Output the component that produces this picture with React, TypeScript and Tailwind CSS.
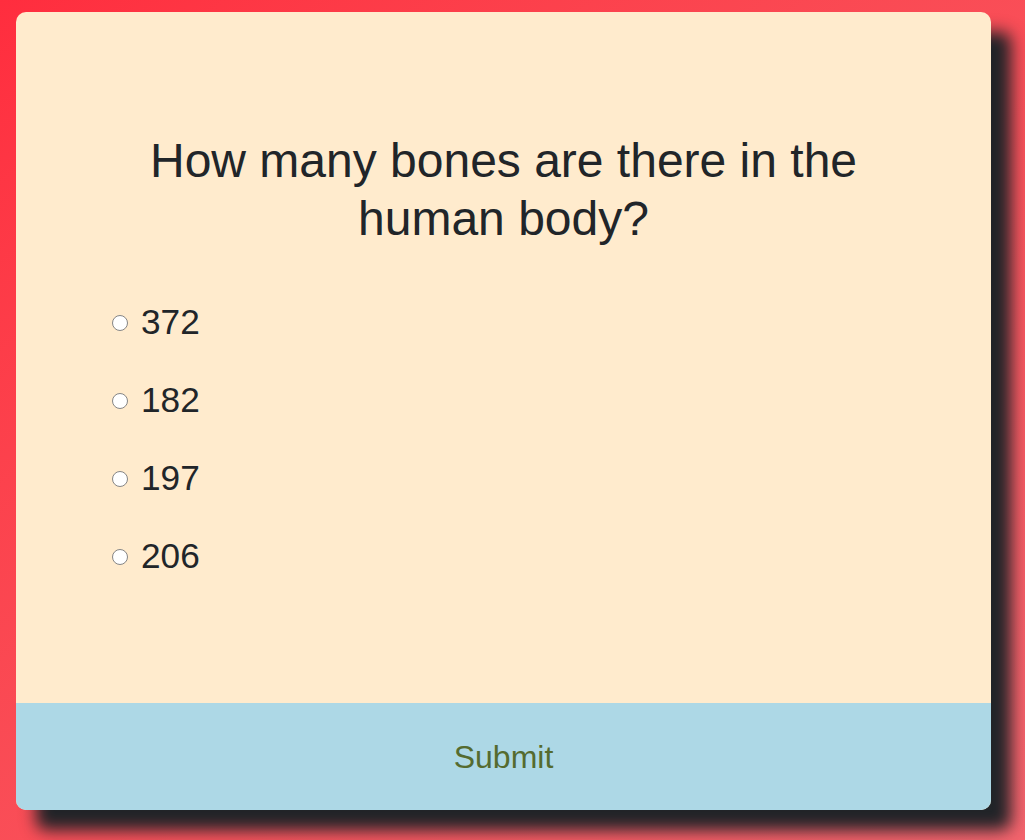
import { useState } from "react";

const OPTIONS = ["372", "182", "197", "206"];

export default function App() {
  const [selected, setSelected] = useState<string | null>(null);

  return (
    <div
      className="min-h-screen bg-linear-to-br from-[#ff2d3e] to-[#f3646d] pl-4 pt-3"
      style={{ fontFamily: '"Liberation Sans", Arial, sans-serif' }}
    >
      <div className="flex h-[798px] w-[975px] flex-col rounded-[10px] bg-[#ffebcd] text-[#212529] shadow-[20px_20px_16px_#212428]">
        {/* Question */}
        <div className="flex-1 px-24 pt-[120px]">
          <h1 className="text-center text-[48px] leading-[1.2] font-normal">
            How many bones are there in the human body?
          </h1>
          <ul className="mt-[55px] flex flex-col gap-[38px]">
            {OPTIONS.map((opt) => (
              <li key={opt}>
                <label className="flex h-10 cursor-pointer items-center gap-[13px] text-[35.2px] leading-10">
                  <input
                    type="radio"
                    name="answer"
                    checked={selected === opt}
                    onChange={() => setSelected(opt)}
                    className="mt-[2px] h-[16px] w-[16px] appearance-none rounded-full border-[1.5px] border-[#858585] bg-white checked:border-[5px] checked:border-[#0075ff]"
                  />
                  <span>{opt}</span>
                </label>
              </li>
            ))}
          </ul>
        </div>

        {/* Submit */}
        <button className="flex h-[107px] items-center justify-center rounded-b-[10px] bg-[#add8e6] text-[32px] text-[#556b2f]">
          Submit
        </button>
      </div>
    </div>
  );
}
